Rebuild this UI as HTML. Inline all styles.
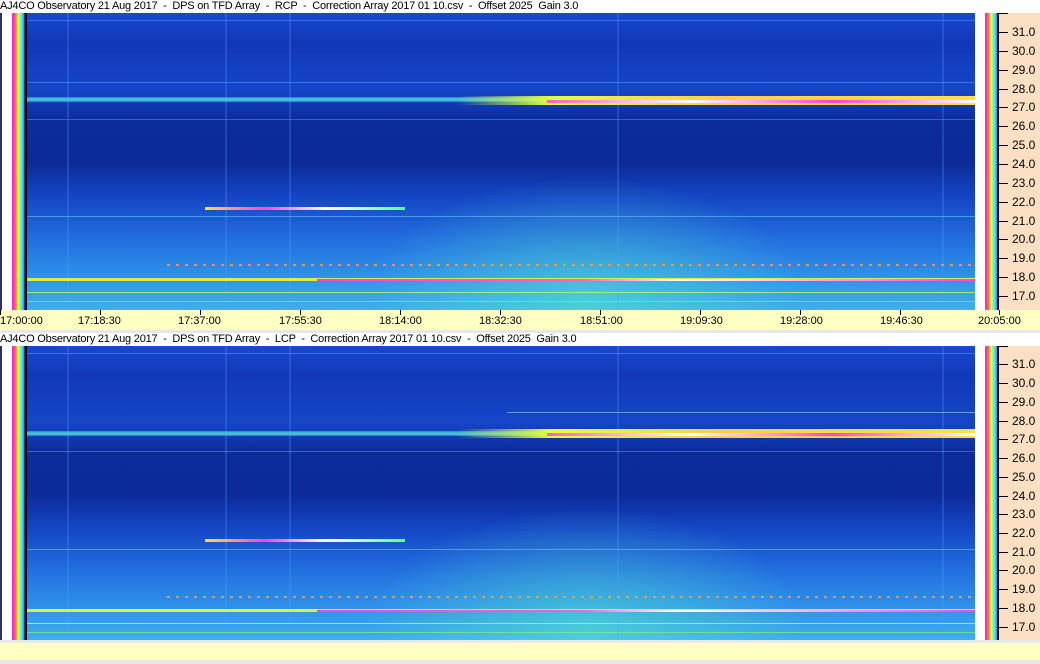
<!DOCTYPE html>
<html><head><meta charset="utf-8"><style>
*{margin:0;padding:0;box-sizing:border-box}
body{width:1040px;height:664px;background:#fff;position:relative;overflow:hidden;font-family:"Liberation Sans",sans-serif;font-size:11px;color:#000}
.title{position:absolute;left:0;height:13px;line-height:13px;font-size:11px;white-space:pre;letter-spacing:-0.2px}
.lstrip{position:absolute;left:0;width:27px;background:linear-gradient(90deg,#303060 0,#303060 2px,#fff 2px,#fff 12px,#e020e0 12px,#ff40a0 14px,#ff8040 16px,#ffff40 18px,#80ff80 20px,#40e0ff 22px,#4080ff 24px,#000 25px,#000 27px)}
.spec{position:absolute;left:27px;width:948px;overflow:hidden;
background:
radial-gradient(ellipse 220px 120px at 560px 96%,rgba(90,240,200,.5),rgba(90,240,200,0)),
linear-gradient(180deg,#1848d0 0%,#1238b8 10%,#1645c8 26%,#0d2c9c 36%,#0c2a98 50%,#1446c4 62%,#2068dc 74%,#2c8ae8 86%,#3cb0ec 100%)}
.vl{position:absolute;top:0;bottom:0;width:2px;background:rgba(80,160,255,.25)}
.ln{position:absolute;height:2px}
.cbar{position:absolute;left:985px;width:14px;background:linear-gradient(90deg,#e020e0 0,#ff40a0 2px,#ff8040 4px,#ffff40 6px,#80ff80 8px,#40e0ff 10px,#4080ff 12px,#000 12px)}
.yax{position:absolute;left:999px;width:41px;background:#fde0c4}
.tk{position:absolute;left:0;width:9px;height:1px;background:#000}
.yl{position:absolute;left:13px;font-size:12px;line-height:12px}
.tax{position:absolute;left:0;width:1040px;background:#ffffc4}
.tl{position:absolute;top:5px;font-size:11px}
.tt{position:absolute;top:0;width:1px;height:5px;background:#000}
.gr{position:absolute;left:0;width:1040px;height:3px;background:#e6e6ee}
</style></head><body>

<div class="title" style="top:0">AJ4CO Observatory 21 Aug 2017  -  DPS on TFD Array  -  RCP  -  Correction Array 2017 01 10.csv  -  Offset 2025  Gain 3.0</div>
<div class="lstrip" style="top:13px;height:297px"></div>
<div class="spec" style="top:13px;height:297px">
 <div class="vl" style="left:198px"></div><div class="vl" style="left:262px"></div><div class="vl" style="left:40px"></div><div class="vl" style="left:590px"></div><div class="vl" style="left:915px"></div>
 <div class="ln" style="top:7px;left:0;width:948px;height:1px;background:rgba(80,140,255,.6)"></div>
 <div class="ln" style="top:69px;left:0;width:948px;height:1px;background:rgba(90,150,255,.6)"></div>
 <div class="ln" style="top:84px;left:0;width:948px;height:5px;background:linear-gradient(180deg,rgba(64,192,255,.5),#50d0d0,rgba(64,192,255,.5))"></div>
 <div class="ln" style="top:83px;left:430px;width:518px;height:9px;background:linear-gradient(90deg,rgba(255,255,64,0),#e0ff40 18%,#ffd040 50%,#ffe040)"></div>
 <div class="ln" style="top:87px;left:520px;width:428px;height:3px;background:linear-gradient(90deg,#ff60c0,#fff,#ff40e0,#fff)"></div>
 <div class="ln" style="top:106px;left:0;width:948px;height:1px;background:rgba(90,150,255,.5)"></div>
 <div class="ln" style="top:194px;left:178px;width:200px;height:3px;background:linear-gradient(90deg,#ffe040,#ff40e0 30%,#fff 60%,#60ff80)"></div>
 <div class="ln" style="top:203px;left:0;width:948px;height:1px;background:rgba(110,190,255,.6)"></div>
 <div class="ln" style="top:251px;left:140px;width:808px;height:2px;background:repeating-linear-gradient(90deg,rgba(255,160,64,.8) 0 3px,transparent 3px 9px)"></div>
 <div class="ln" style="top:265px;left:0;width:948px;height:3px;background:#d8f040"></div>
 <div class="ln" style="top:266px;left:290px;width:660px;height:2px;background:linear-gradient(90deg,#ff40e0,#ff60c0 40%,#fff 55%,#ff40e0)"></div>
 <div class="ln" style="top:279px;left:0;width:948px;height:1px;background:#a0f080"></div>
 <div class="ln" style="top:288px;left:0;width:948px;height:1px;background:rgba(150,230,130,.7)"></div>
</div>
<div class="cbar" style="top:13px;height:297px"></div>
<div class="yax" style="top:13px;height:297px">
 <div class="tk" style="top:0"></div>
 <div class="tk" style="top:19px"></div><div class="yl" style="top:13px">31.0</div>
 <div class="tk" style="top:38px"></div><div class="yl" style="top:32px">30.0</div>
 <div class="tk" style="top:57px"></div><div class="yl" style="top:51px">29.0</div>
 <div class="tk" style="top:76px"></div><div class="yl" style="top:70px">28.0</div>
 <div class="tk" style="top:94px"></div><div class="yl" style="top:88px">27.0</div>
 <div class="tk" style="top:113px"></div><div class="yl" style="top:107px">26.0</div>
 <div class="tk" style="top:132px"></div><div class="yl" style="top:126px">25.0</div>
 <div class="tk" style="top:151px"></div><div class="yl" style="top:145px">24.0</div>
 <div class="tk" style="top:170px"></div><div class="yl" style="top:164px">23.0</div>
 <div class="tk" style="top:189px"></div><div class="yl" style="top:183px">22.0</div>
 <div class="tk" style="top:208px"></div><div class="yl" style="top:202px">21.0</div>
 <div class="tk" style="top:226px"></div><div class="yl" style="top:220px">20.0</div>
 <div class="tk" style="top:245px"></div><div class="yl" style="top:239px">19.0</div>
 <div class="tk" style="top:264px"></div><div class="yl" style="top:258px">18.0</div>
 <div class="tk" style="top:283px"></div><div class="yl" style="top:277px">17.0</div>
</div>
<div class="tax" style="top:310px;height:20px">
 <div class="tt" style="left:0"></div><div class="tl" style="left:0">17:00:00</div>
 <div class="tt" style="left:100px"></div><div class="tl" style="left:78px">17:18:30</div>
 <div class="tt" style="left:200px"></div><div class="tl" style="left:178px">17:37:00</div>
 <div class="tt" style="left:300px"></div><div class="tl" style="left:279px">17:55:30</div>
 <div class="tt" style="left:400px"></div><div class="tl" style="left:379px">18:14:00</div>
 <div class="tt" style="left:500px"></div><div class="tl" style="left:479px">18:32:30</div>
 <div class="tt" style="left:600px"></div><div class="tl" style="left:580px">18:51:00</div>
 <div class="tt" style="left:700px"></div><div class="tl" style="left:680px">19:09:30</div>
 <div class="tt" style="left:800px"></div><div class="tl" style="left:780px">19:28:00</div>
 <div class="tt" style="left:900px"></div><div class="tl" style="left:880px">19:46:30</div>
 <div class="tt" style="left:999px"></div><div class="tl" style="left:978px">20:05:00</div>
</div>
<div class="gr" style="top:330px"></div>

<div class="title" style="top:333px">AJ4CO Observatory 21 Aug 2017  -  DPS on TFD Array  -  LCP  -  Correction Array 2017 01 10.csv  -  Offset 2025  Gain 3.0</div>
<div class="lstrip" style="top:346px;height:294px"></div>
<div class="spec" style="top:346px;height:294px">
 <div class="vl" style="left:198px"></div><div class="vl" style="left:262px"></div><div class="vl" style="left:40px"></div><div class="vl" style="left:590px"></div><div class="vl" style="left:915px"></div>
 <div class="ln" style="top:7px;left:0;width:948px;height:1px;background:rgba(80,140,255,.6)"></div>
 <div class="ln" style="top:66px;left:480px;width:468px;height:1px;background:rgba(128,192,255,.7)"></div>
 <div class="ln" style="top:85px;left:0;width:948px;height:5px;background:linear-gradient(180deg,rgba(64,192,255,.5),#50d0d0,rgba(64,192,255,.5))"></div>
 <div class="ln" style="top:83px;left:430px;width:518px;height:9px;background:linear-gradient(90deg,rgba(255,255,64,0),#e0ff40 18%,#ffd040 50%,#ffe040)"></div>
 <div class="ln" style="top:87px;left:520px;width:428px;height:3px;background:linear-gradient(90deg,#ff60c0,#fff,#ff40e0,#fff)"></div>
 <div class="ln" style="top:105px;left:0;width:948px;height:1px;background:rgba(90,150,255,.5)"></div>
 <div class="ln" style="top:193px;left:178px;width:200px;height:3px;background:linear-gradient(90deg,#ffe040,#ff40e0 30%,#fff 60%,#60ff80)"></div>
 <div class="ln" style="top:203px;left:0;width:948px;height:1px;background:rgba(110,190,255,.6)"></div>
 <div class="ln" style="top:250px;left:140px;width:808px;height:2px;background:repeating-linear-gradient(90deg,rgba(255,160,64,.8) 0 3px,transparent 3px 9px)"></div>
 <div class="ln" style="top:263px;left:0;width:948px;height:3px;background:#d8f040"></div>
 <div class="ln" style="top:264px;left:290px;width:660px;height:2px;background:linear-gradient(90deg,#ff40e0,#ff60c0 40%,#fff 55%,#ff40e0)"></div>
 <div class="ln" style="top:277px;left:0;width:948px;height:1px;background:#a0f080"></div>
 <div class="ln" style="top:286px;left:0;width:948px;height:1px;background:rgba(150,230,130,.7)"></div>
</div>
<div class="cbar" style="top:346px;height:294px"></div>
<div class="yax" style="top:346px;height:294px">
 <div class="tk" style="top:0"></div>
 <div class="tk" style="top:18px"></div><div class="yl" style="top:12px">31.0</div>
 <div class="tk" style="top:37px"></div><div class="yl" style="top:31px">30.0</div>
 <div class="tk" style="top:56px"></div><div class="yl" style="top:50px">29.0</div>
 <div class="tk" style="top:75px"></div><div class="yl" style="top:69px">28.0</div>
 <div class="tk" style="top:93px"></div><div class="yl" style="top:87px">27.0</div>
 <div class="tk" style="top:112px"></div><div class="yl" style="top:106px">26.0</div>
 <div class="tk" style="top:131px"></div><div class="yl" style="top:125px">25.0</div>
 <div class="tk" style="top:150px"></div><div class="yl" style="top:144px">24.0</div>
 <div class="tk" style="top:168px"></div><div class="yl" style="top:162px">23.0</div>
 <div class="tk" style="top:187px"></div><div class="yl" style="top:181px">22.0</div>
 <div class="tk" style="top:206px"></div><div class="yl" style="top:200px">21.0</div>
 <div class="tk" style="top:224px"></div><div class="yl" style="top:218px">20.0</div>
 <div class="tk" style="top:243px"></div><div class="yl" style="top:237px">19.0</div>
 <div class="tk" style="top:262px"></div><div class="yl" style="top:256px">18.0</div>
 <div class="tk" style="top:281px"></div><div class="yl" style="top:275px">17.0</div>
</div>
<div class="gr" style="top:640px"></div>
<div class="tax" style="top:643px;height:17px"></div>
<div class="gr" style="top:660px;height:4px"></div>
</body></html>
